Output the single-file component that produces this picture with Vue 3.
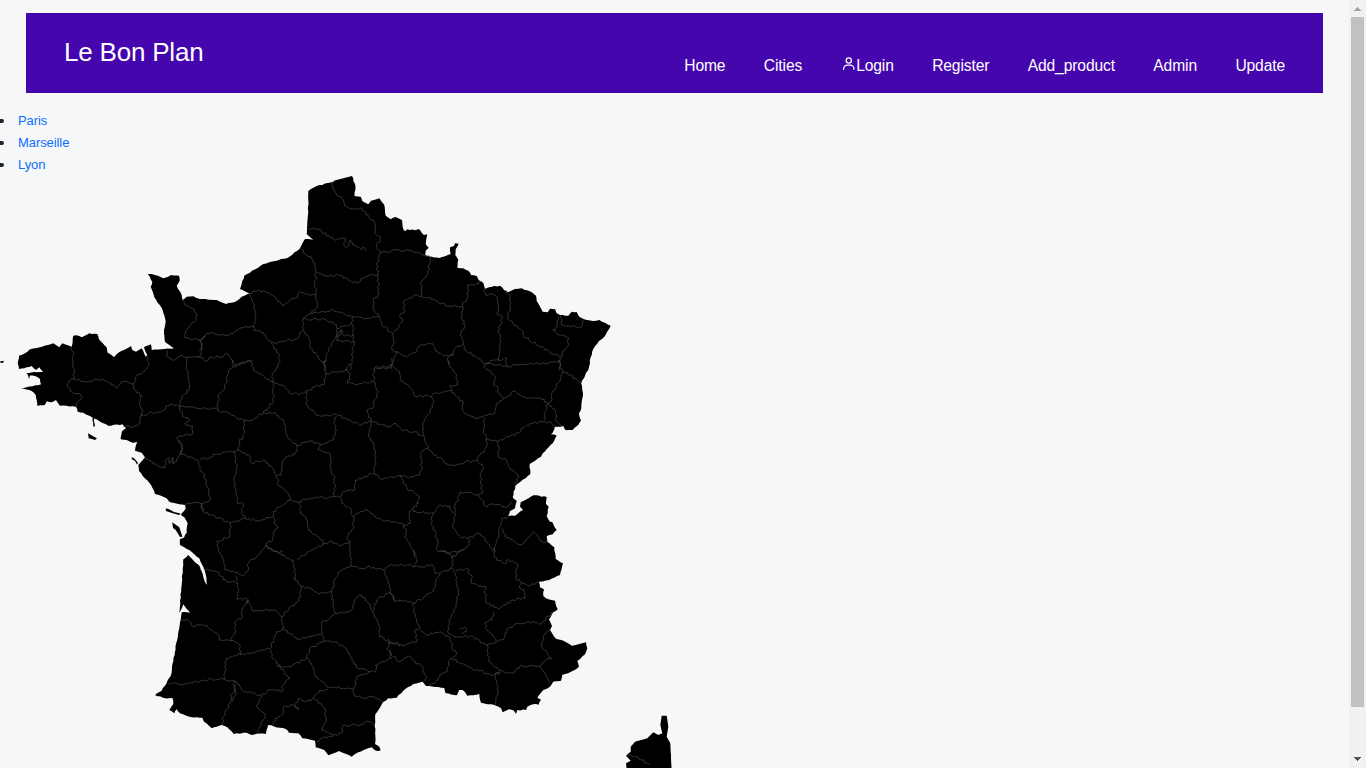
<script setup>
const cities = ['Paris', 'Marseille', 'Lyon']
const links = ['Home', 'Cities', 'Login', 'Register', 'Add_product', 'Admin', 'Update']

// Coastlines and frontiers, in map pixels.
const mainland = `352,176 355.5,186 354.5,196 360.7,196.7 362.3,201 368.3,204.3 371,200.7 379.3,198.3 384,204.3 385.7,215.7 390.7,219.3 395.7,217
402,220 402.7,227.3 405,231.3 407.3,229.3 415,230.3 419,229 424,235 427.3,234.3 425.7,244 428.7,247.7 425.7,250.7 425.3,255 431.7,256.7 439.3,258 450.7,254
450,247.3 454,246 455,243.3 458.7,243.7 455.7,249.3 455.3,255 458.3,260 457.3,267.7 463.3,268.3 468.3,270.7 471,275 476.7,276 478.7,280 483.3,282.7
485,288.7 491.7,286.7 500,285.7 504,290 508.3,292.3 515,289 521.7,288.3 531.7,292.3 536,295.7 536.7,301 542.7,311.7 547.7,312.3 550,308.7 555,309.3
556.7,313.3 560,315 568.3,315.7 571.7,311.7 576.7,312 579.3,316.7 584,319.3 593.3,321 599.3,320 610.7,325.7 604,337.3 599,341 593.3,349 590.7,357.3
588.3,370 586,372.7 581.3,383.3 583,393.3 581.7,401.7 581.3,408.3 579,413.3 581,420.7 578.3,425 572.7,430 565.7,430.3 563.3,426 555,426.7 554,430
551,434.3 556.7,435.5 552.7,443.3 542.7,453.3 541,456.7 529.7,464 530.3,474 515.3,486 512.7,497.3 516.7,500.7 515,508.3 510,511 508.3,516 515,515.7
523,510 520,506.7 520.7,502.3 533.3,495.3 546.7,497 546,504 548.7,506.7 546.7,516 550,521.7 552.3,522 556.7,530 552.7,534.3 546.7,536 547.3,541.7
554.3,547.3 555.7,559 563,563.3 560,575 549.3,580 539,581.7 540,587.3 544,589.3 543.3,596 548.3,599.3 555,600.7 557.7,609.3 553.3,612.3 549,619.3
552,626 550,630 556,638.7 564,641 571.7,645.7 586,642.3 587.3,648.3 585,654.3 577.3,661 579,666.7 576,669.3 570,672.3 562.3,675 561,680.7 553.3,681.7
550,686.7 543.3,690 537.3,697.7 541,699.7 538.7,704.7 533,704.3 527.3,706.7 526,710 517.3,710 516,714 514,710.7 509,709.3 502.7,712.3 501,708.3
496,705.7 491,704.3 481,702.7 479.3,694 467.3,695.7 462.7,690 459,690 456.7,695.3 445.7,693.3 444.3,688 426,686 422.7,681.7 413.3,684 403.3,690.7
396.7,697.7 388.3,698.3 383.3,702 375.3,714.3 375,744 379.3,746.7 380.7,750.3 376,750.7 371.7,747.3 358.3,752.3 351.7,756.7 339,751 328.3,755.3
324.3,750 315.7,747.3 315,740.7 302.3,738.3 298.3,733.3 289,732.7 285.7,729 268.3,725 265.7,734 256.7,733.7 251.7,735 246.7,732.7 233.7,734 227.3,727.3
221.7,725 211.7,728.3 204,721.7 202.3,717.7 191.7,717.3 180,713.3 176.7,709.3 174.3,713.3 169.3,710 173.3,704 172.7,698.3 165,698.3 155,695 161.7,690.7
170.7,676 180,622.3 181.7,612.3 190,612.7 183.3,604.3 179.3,612.7 182.7,570 183.3,559.3 188.3,555 200,566.7 203.3,577 207.8,587.7 205,572 203.3,567 199.3,558.3
189.3,550 180,545 180,539 184,537.7 186.7,532.7 187.7,523.3 184.3,517.3 180.7,515 185.7,508.3 185,505 179.3,504.3 170,502.3 166.7,498.3 155,494
151,485 139,471 138.3,465 145,457.3 141.7,452.7 135,450.7 137.3,441.7 132.7,442.7 126.7,440 120.7,439.3 121.7,431.7 126,428.3 122.7,424.3 108.3,425.7
94,418.5 94.6,427 93,426 92.7,417.7 83.3,412.7 77.7,411.7 76,406.7 60,405.7 56,400 51.7,402.3 46.7,401.3 44.3,405.3 37.3,405.7 35.7,395 31.7,391 21,388.3
41,384.3 40,379 35,376 30,375.5 29,379 28,375 26.3,373.3 34,372 43.3,371.7 39.3,367.3 36,370 31.7,366 26.7,367.3 19,369 17.7,363.3 19,355.7 25,353.3 30,349.3 40,347.3
53.3,343.3 59.3,347.3 62.3,343.3 71.7,346.7 73.3,335.7 76.7,335.3 81.7,337.3 89.3,333.3 97.3,334 99,339.3 106.7,347.3 107.7,352.7 114,357.3 119,352.3
131,346 132.3,350 136,351.7 141.7,348.3 145.7,356.7 147.3,355 144,347.3 151,344.3 151.7,350 174,348.3 165,341.7 164,330 165.7,321.7 162.7,310
154.3,297.3 150.7,286.7 152.3,281.7 147.7,274 155,275 163.3,278.3 171,275 179,275.7 179.7,280.7 176.7,286 181.7,295 182.7,300 186.7,296.7 193.3,296.3
200,299 216.7,300 226,304 236.7,301 241.7,296.7 249.3,293.3 240,289 244.3,275.7 263.3,264 287.3,258 299.3,249.3 305,239 313.3,240 306.7,234
307.7,216.7 308.3,191 316.7,186 333.3,181.7 334.5,180.5`
const islands = [
  '661.7,715.7 666.7,715.7 668.3,726.7 666.7,736.7 670.3,743.3 671.7,770 626.7,770 626,763.3 630.7,760.7 626,755.7 630.7,751.7 630.7,746.7 635,741.7 647.3,738.3 653.3,732.3 658.3,735 662.3,733.3 660.3,725',
  '0,361.5 4,360.7 3,363 0,362.5',
  '88,433.3 97,438.3 95,440 88.7,438.3',
  '165.7,508.5 168,508.7 174,512 180.7,513.5 179,515 172,513 166,511',
  '172.3,522.3 179.3,527.3 182.3,536.7 180,537 175.7,530 173,528',
  '131.7,457.3 134,458.3 138,463 137,464.5 135,461 131.7,459',
]

// Department borders, surveyed on sheets drawn at three times map scale.
const sheets = [
  { x: 0, y: 260, lines: `210,258 222,285 218,300 222,357|222,357 205,365 200,375 212,395 243,405 243,418 228,430 227,442
|222,357 262,365 290,357 325,368 350,385 362,368 382,365 400,372
|443,290 445,320 430,337 408,350 408,362 398,372 408,392 427,408 418,430 427,448 422,470 421,490 410,498 370,500
|422,470 445,460 485,453 510,432 540,440 600,445 655,448|497,270 503,292 515,300 540,288 562,292 600,292 615,305 635,292 660,292
|562,292 560,330 568,390 545,410 540,440 548,470 570,480 555,492 578,498 578,520 550,528 530,533 545,560 540,585
|550,118 555,135 583,150 590,180 565,203 552,228 575,240 597,240 607,265 595,292|597,240 615,228` },
  { x: 200, y: 170, lines: `397,37 410,75 430,90 435,108 455,117 485,115 495,125 497,135 520,150 525,190 543,203 527,235 543,248
|325,177 355,178 400,208 437,205 433,228 443,230 446,215 452,210 458,225 478,232 484,240 488,232 500,243|543,248 600,240
|303,238 340,270 348,305 345,340 348,378 352,405 335,430 310,447 310,480|348,305 380,318 415,315 470,340 495,320 533,315
|543,248 530,280 533,315 537,370 520,390 522,420 537,437|348,378 300,365 285,385 248,407 215,375 178,360 148,370
|148,370 160,400 165,440 162,482 190,487 215,520 235,550 240,575|15,498 20,490 85,495 120,475 162,470|15,498 3,510 5,530 -3,543
|60,560 70,560 82,550 100,575 105,588 130,575 157,572|215,520 290,507 310,480 325,500 330,530 350,555 365,575 378,570 372,600
|335,430 370,425 400,420 460,440 500,445 537,437|310,447 380,450 410,465 408,500 390,530 375,575
|460,440 455,462 410,475|460,462 462,515 410,512 425,480 430,495 460,495|408,500 425,480|462,515 455,570 450,600
|537,437 545,465 580,490 578,540 590,545 575,580 575,595 525,592` },
  { x: 400, y: 170, lines: `0,243 30,240 50,248 90,260 85,310 63,335 63,378 40,378 10,395 15,425 0,435 8,455 -17,487
|63,378 90,382 120,402 187,410 203,375 203,345 235,342 245,333|187,410 185,445 195,465 180,495 190,523
|-10,545 20,560 45,548 65,525 97,520 105,543 140,557 160,555 165,535 190,523 192,538 255,580 295,570 320,565 323,590
|160,555 142,565 150,585|253,355 257,375 275,372 292,382 293,435 307,440 298,480 300,530 295,570
|318,360 330,385 330,415 322,445 370,485 372,500 480,562
|480,562 503,530 507,505 490,495 480,495 458,480 472,465 475,440|480,435 485,465 530,472 545,470 550,450|480,562 478,600` },
  { x: 200, y: 360, lines: `100,0 100,20 85,35 75,85 60,100 52,130 55,153 80,155 110,175 135,180 160,180 190,158 225,157
|100,20 120,15 150,0 165,35 220,65 222,110 210,140 190,158|240,5 235,20 217,40 220,65 255,80 275,102 310,100 345,80 372,75 378,40 370,5
|378,40 435,30 450,40 443,70 480,70 520,65 522,25 575,17 600,35 600,60|575,-5 575,17|435,30 450,10
|318,95 320,135 350,167 410,163 450,180 480,197 512,183|520,65 535,95 520,140 500,150 512,183 505,225 520,250 528,290 522,338
|512,183 565,200 588,190 600,203|225,157 250,180 262,230 290,258 292,275 250,300 243,345 230,347 205,310 190,300 155,310 150,290 115,270 118,245 130,230 135,180
|290,258 330,243 360,252 400,240 410,210 400,190 410,170|360,252 355,270 390,280 392,330 405,350 403,410
|0,297 25,295 40,283 100,275 115,270|100,275 108,310 103,380 112,430 130,430 125,460 137,475
|-5,302 0,325 20,360 25,405 30,420 5,432 10,455 90,490 135,475 180,483 218,470 220,455 270,420 265,400 235,377 230,347
|270,420 300,425 320,415 403,410 420,412 430,395 465,390 465,360 522,338 545,358 600,348
|420,412 425,430 455,450 462,500 440,530 450,550 452,600|300,425 300,460 320,480 325,510 368,540 368,555 325,575 292,598
|368,555 390,543 425,557 450,548|462,470 500,447 530,475 605,490 620,510 613,530 652,590
|220,470 222,490 235,500 218,520 218,540 197,553
|90,490 90,530 50,545 55,575 72,600|197,553 215,572 250,575` },
  { x: 400, y: 360, lines: `0,62 25,75 45,108 95,108 100,130 88,160 72,185 68,215 85,265 60,280 65,320 60,345 25,355 0,345
|95,103 155,92 190,130 190,155 230,175 285,160 290,130 310,115 345,93 370,110 400,115 420,112 445,132
|155,92 148,78 172,75 170,45 148,20 143,0|310,115 295,100 295,85 280,75 288,55 265,30 250,20
|250,15 275,10 320,20 375,12 440,12 480,0 480,25 490,33 543,68|490,33 470,80 455,100 452,125 437,135 435,180
|445,132 467,152 470,185 485,197|255,172 250,205 258,240 290,243 345,225 380,195 430,185 455,190 462,205
|258,240 260,260 230,300 150,317 85,268|290,245 300,265 293,290 320,300 330,325 355,345 345,375
|230,300 250,320 240,345 248,400 235,405|235,405 180,395 165,445 160,505 180,530 205,535 210,553 195,568 150,580 115,575 108,520 92,490 100,460
|235,405 260,442 280,432 318,443 335,425|40,455 100,460 115,438 150,437 160,460
|205,535 240,520 285,575 305,475 325,470|305,505 315,530 365,555 400,515 430,548 440,545
|0,345 20,385 55,405 55,430 38,445 40,455|38,445 28,455 30,490 12,497|0,203 25,215 45,215 68,230` },
  { x: 120, y: 440, lines: `75,52 100,72 135,85 139,58 145,52 150,70 158,52 160,72 180,42 235,60|195,195 235,187 245,190 250,215
|312,360 312,388 340,395 370,408 385,390 385,370 410,350 437,315|250,385 290,395 320,425 355,430 350,478 385,478 380,490
|437,315 460,330 520,360 525,420|350,425 350,408|180,42 187,20 178,0` },
  { x: 140, y: 570, lines: `120,155 145,150 155,167 200,165 235,195 237,210 270,212 300,225 300,255 390,237 410,185 430,175 425,140 400,120 335,120 325,90
|325,90 305,125 305,145 285,155 285,190 270,212
|300,250 260,265 252,328 290,335 305,360 365,378 390,360 425,365 430,345 450,325 420,290 395,260 395,240
|425,140 440,125 465,100 483,80 483,50 460,20|430,175 475,207 545,190 550,215 510,235 500,265 450,290 410,288
|483,50 510,55 537,72 575,65 580,105 587,130|587,130 570,145 545,155 548,190|575,65 590,20 605,0 632,-12 632,-30
|632,-12 665,-5 690,-10 730,0 750,-15
|587,130 630,125 650,85 665,75 685,100 697,125 715,160 718,200 750,215 740,235 755,265 735,275 707,285 705,307 655,297 635,270 630,250 590,215 550,215
|697,125 710,90 750,65 740,20 730,0|500,265 520,290 525,320 560,350 640,358 650,320 690,305
|85,340 130,343 190,330 252,328|280,330 290,370 270,400 250,440 247,465|365,378 350,405 375,435 360,470 350,490
|278,340 285,360 272,375 275,390|400,465 405,445 425,435 430,412 460,405 475,420 465,405 475,385 500,395 520,385 540,360 565,358
|520,385 555,415 560,450 545,480 580,495 530,515|580,495 605,490 608,467 660,465 680,453 705,465
|640,358 645,378 670,385 690,378 730,395|745,215 780,227|750,65 765,92` },
  { x: 390, y: 550, lines: `0,45 50,45 75,50 130,47 135,70 150,72 187,55 187,25 175,10 150,0|187,25 200,10 220,0
|150,72 135,100 130,125 70,160 45,150 15,155 0,127|70,160 75,200 90,235 75,240 80,275 35,285 0,275
|187,55 197,70 205,125 190,190 177,210 175,250|197,60 230,55 247,80 245,100 285,108 287,155 325,178 370,150 405,145 403,120 390,115 393,95 415,108 445,97
|90,240 110,255 150,245 180,262 185,295 200,310 185,325 175,335 172,365 150,375 145,390 117,405
|175,250 200,262 245,258 290,285 340,270 350,240 375,222 415,215 450,222 490,187|310,185 307,210 285,218 290,240 315,265 315,275
|290,285 298,335 330,365 315,378 325,410 318,450 315,465|185,325 235,352 310,375 330,365
|330,360 365,370 390,348 450,348 460,335 485,325 455,285 460,262 480,240|450,348 468,375 480,400|70,50 82,35 70,0
|305,0 320,30 345,42 355,28 385,45 377,85 390,95|0,300 10,320 30,335 55,318 100,355 110,380 105,395
|710,617 745,622 780,645|208,235 225,230 230,245 215,250` },
]

let seed = 7
const rand = () => (seed = (seed * 16807) % 2147483647) / 2147483647 - 0.5
const parse = (s) => s.trim().split(/\s+/).map((p) => p.split(',').map(Number))

// Adds small bends between survey points so lines look hand-traced.
function trace(points, amount, step) {
  const out = [points[0]]
  for (let i = 1; i < points.length; i++) {
    const [ax, ay] = points[i - 1]
    const [bx, by] = points[i]
    const len = Math.hypot(bx - ax, by - ay)
    const n = Math.max(1, Math.round(len / step))
    for (let k = 1; k < n; k++) {
      const d = rand() * amount
      out.push([ax + ((bx - ax) * k) / n - ((by - ay) / len) * d, ay + ((by - ay) * k) / n + ((bx - ax) / len) * d])
    }
    out.push([bx, by])
  }
  return 'M' + out.map((p) => p.map((v) => v.toFixed(1)).join(' ')).join('L')
}

const land = [trace(parse(mainland), 0.9, 3), ...islands.map((s) => trace(parse(s), 0.2, 4))].map((d) => d + 'Z').join('')
const borders = sheets
  .flatMap((s) => s.lines.split('|').map((l) => trace(parse(l).map(([x, y]) => [s.x + x / 3, s.y + y / 3]), 2.6, 2.1)))
  .join('')
</script>

<template>
  <div class="window">
    <div class="page">
      <header class="bar">
        <div class="brand">Le Bon Plan</div>
        <nav class="links">
          <a v-for="l in links" :key="l" class="link">
            <svg v-if="l === 'Login'" class="user" viewBox="0 0 24 24"><path d="M12 2a5 5 0 1 0 5 5 5 5 0 0 0-5-5zm0 8a3 3 0 1 1 3-3 3 3 0 0 1-3 3zm9 11v-1a7 7 0 0 0-7-7h-4a7 7 0 0 0-7 7v1h2v-1a5 5 0 0 1 5-5h4a5 5 0 0 1 5 5v1z" /></svg>{{ l }}
          </a>
        </nav>
      </header>
      <ul class="cities">
        <li v-for="c in cities" :key="c" class="city"><a>{{ c }}</a></li>
      </ul>
      <svg class="map" viewBox="0 175 700 593">
        <path class="land" :d="land" />
        <path class="border" :d="borders" />
      </svg>
    </div>
    <div class="scrollbar">
      <svg class="arrow" viewBox="0 0 17 17"><path d="M8 7h1v1h1v1h1v1h1v1H5v-1h1V9h1V8h1z" fill="#a3a3a3" /></svg>
      <div class="thumb"></div>
      <svg class="arrow" viewBox="0 0 17 17"><path d="M5 6h7v1h-1v1h-1v1H9v1H8V9H7V8H6V7H5z" fill="#505050" /></svg>
    </div>
  </div>
</template>

<style>
body { margin: 0; overflow: hidden; background: #f5f7f9; }
</style>

<style scoped>
.window { display: flex; height: 768px; font-family: "Liberation Sans", Arial, sans-serif; font-size: 13px; color: #212529; }
.page { flex: 1; overflow: hidden; }
.bar { display: flex; justify-content: space-between; box-sizing: border-box; height: 80px; margin: 13px 26px 0; padding: 0 38px; background: #4506ad; color: #fff; }
.brand { font-size: 26px; line-height: 78px; letter-spacing: -.2px; }
.links { display: flex; gap: 38.4px; font-size: 15.6px; line-height: 20px; padding-top: 43px; letter-spacing: -.11px; }
.link { display: flex; color: #fff; }
.user { width: 15.6px; height: 15.6px; fill: #fff; }
.cities { display: grid; margin: 17px 0 0; padding: 0; line-height: 22px; list-style: none; letter-spacing: -.08px; }
.city { display: flex; align-items: center; height: 22px; }
.city::before { content: ""; width: 4px; height: 4px; margin-right: 14px; border-radius: 0 2px 2px 0; background: #212529; }
.cities a { color: #0d6efd; }
.map { display: block; width: 700px; height: 593px; margin-top: -1px; }
.land { fill: #000; }
.border { fill: none; stroke: #5c5c5c; stroke-width: .55; }
.scrollbar { width: 17px; background: #f1f1f1; display: flex; flex-direction: column; }
.arrow { display: block; width: 17px; height: 17px; }
.thumb { height: 690px; margin: 0 2px 44px; background: #c1c1c1; }
</style>
